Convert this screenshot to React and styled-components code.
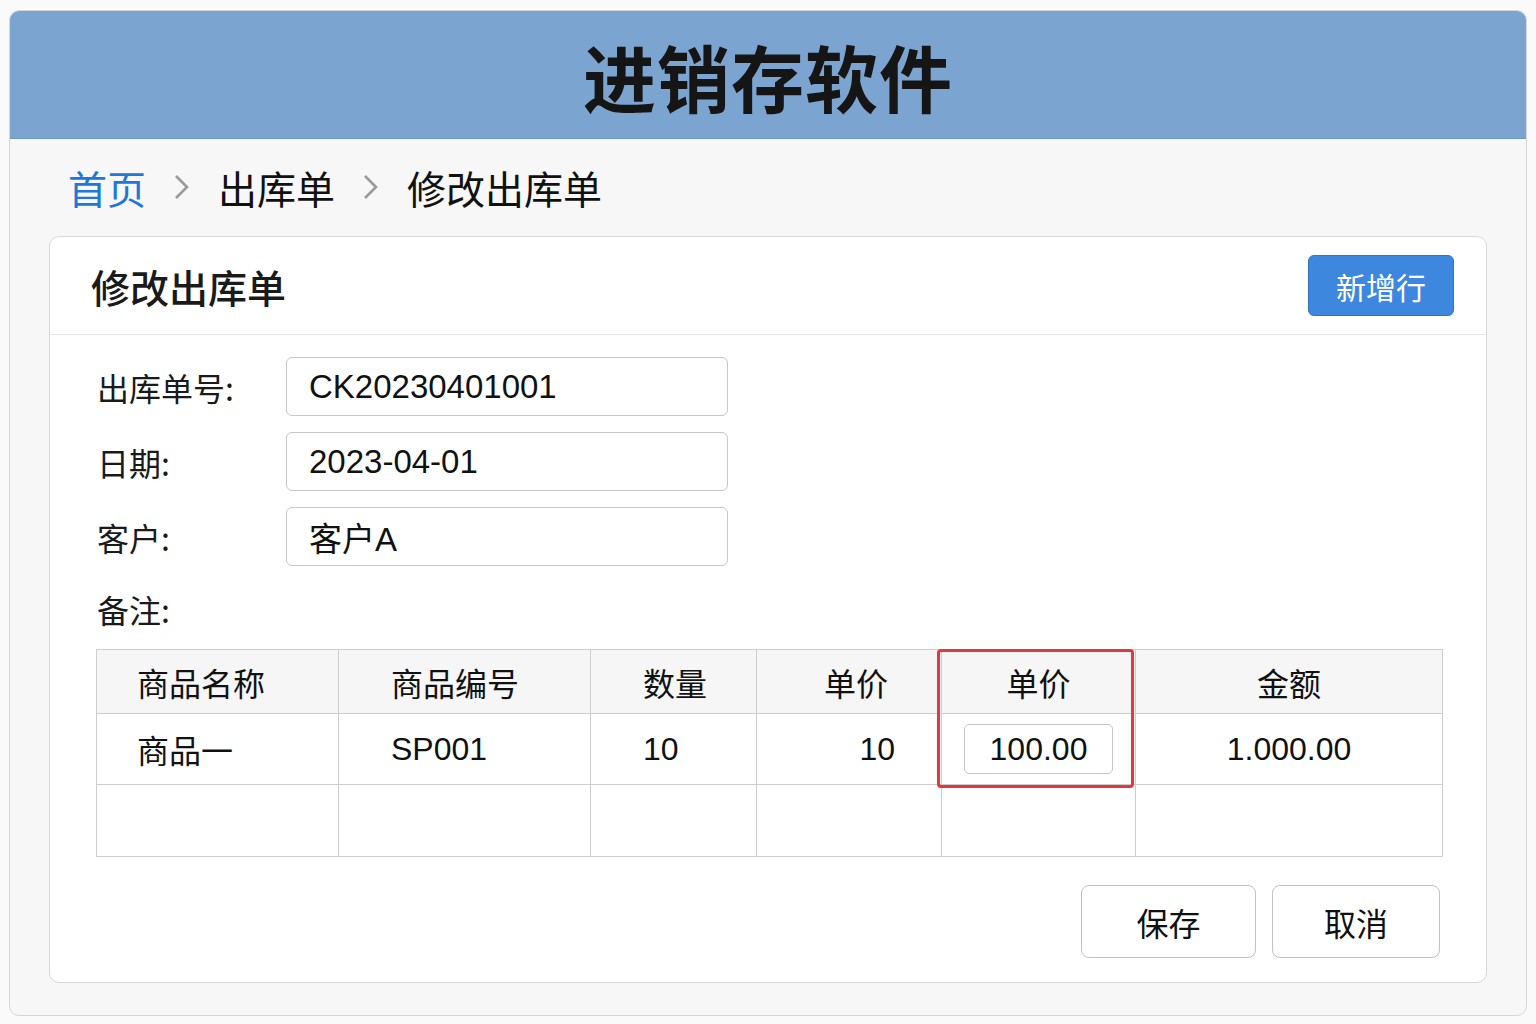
import React from "react";
import styled, { createGlobalStyle } from "styled-components";

const Global = createGlobalStyle`
  html, body { margin: 0; padding: 0; background: #fafafa; }
  body { font-family: "Liberation Sans", "Noto Sans CJK SC", sans-serif; color: #111; }
  * { box-sizing: border-box; }
`;

const Page = styled.div`
  padding: 10px 9px 9px 9px;
  width: 1536px;
  height: 1024px;
`;

const Frame = styled.div`
  border: 1px solid #d6d6d6;
  border-radius: 10px;
  overflow: hidden;
  background: #f7f7f7;
  height: 1006px;
  display: flex;
  flex-direction: column;
`;

const Header = styled.header`
  height: 128px;
  background: #7ba4d0;
  border-bottom: 1px solid #6f97c4;
  display: flex;
  align-items: center;
  justify-content: center;
`;

const Title = styled.h1`
  margin: 0;
  font-family: "Noto Sans CJK SC", sans-serif;
  font-weight: 700;
  font-size: 73px;
  letter-spacing: 1px;
  color: #151515;
`;

const Crumbs = styled.nav`
  height: 97px;
  display: flex;
  align-items: center;
  padding-left: 58px;
  padding-bottom: 2px;
  font-family: "Noto Sans CJK SC", sans-serif;
  font-size: 39px;
`;

const Crumb = styled.span`
  color: ${(p) => (p.$link ? "#1f78d8" : "#111")};
`;

const Sep = styled.span`
  display: inline-flex;
  width: 72px;
  justify-content: center;
  color: #999;
`;

const Card = styled.section`
  margin: 0 39px 0 39px;
  background: #fff;
  border: 1px solid #d8d8d8;
  border-radius: 10px;
  display: flex;
  flex-direction: column;
  height: 747px;
`;

const CardHead = styled.div`
  height: 98px;
  border-bottom: 1px solid #e6e6e6;
  display: flex;
  align-items: center;
  justify-content: space-between;
  padding: 0 32px 0 41px;
`;

const CardTitle = styled.h2`
  margin: 0;
  font-family: "Noto Sans CJK SC", sans-serif;
  font-weight: 500;
  font-size: 39px;
  color: #1a1a1a;
`;

const PrimaryButton = styled.button`
  width: 146px;
  height: 61px;
  background: #3e87de;
  border: 1px solid #2f74c8;
  border-radius: 6px;
  color: #fff;
  font-family: "Noto Sans CJK SC", sans-serif;
  font-size: 30px;
  padding: 0;
`;

const CardBody = styled.div`
  padding: 22px 46px 0 46px;
  display: flex;
  flex-direction: column;
`;

const FormRow = styled.div`
  display: flex;
  align-items: center;
  height: 59px;
  margin-bottom: 16px;
`;

const NoteRow = styled.div`
  display: flex;
  align-items: flex-start;
  height: 67px;
  padding-top: 4px;
`;

const Label = styled.label`
  width: 190px;
  font-family: "Noto Sans CJK SC", sans-serif;
  font-size: 32px;
  color: #1a1a1a;
  padding-left: 1px;
`;

const Field = styled.div`
  width: 442px;
  height: 59px;
  border: 1px solid #c8c8c8;
  border-radius: 6px;
  display: flex;
  align-items: center;
  padding-left: 22px;
  font-family: "Liberation Sans", "Noto Sans CJK SC", sans-serif;
  font-size: 33px;
  color: #111;
`;

const TableWrap = styled.div`
  position: relative;
`;

const Table = styled.table`
  width: 1346px;
  border-collapse: collapse;
  table-layout: fixed;
  font-family: "Liberation Sans", "Noto Sans CJK SC", sans-serif;
  font-size: 32px;
  color: #111;
`;

const Th = styled.th`
  height: 64px;
  background: #f6f6f6;
  border: 1.5px solid #cdcdcd;
  font-weight: 400;
  text-align: ${(p) => p.$align || "left"};
  padding: ${(p) => p.$pad || "0 0 0 40px"};
  font-family: "Noto Sans CJK SC", sans-serif;
`;

const Td = styled.td`
  height: ${(p) => p.$h || 71}px;
  border: 1.5px solid #cdcdcd;
  text-align: ${(p) => p.$align || "left"};
  padding: ${(p) => p.$pad || "0 0 0 40px"};
  vertical-align: middle;
  font-family: ${(p) => (p.$cjk ? '"Noto Sans CJK SC", sans-serif' : "inherit")};
`;

const CellInput = styled.div`
  display: inline-flex;
  align-items: center;
  justify-content: center;
  width: 149px;
  height: 50px;
  border: 1px solid #c6c6c6;
  border-radius: 5px;
  font-size: 32px;
`;

const Highlight = styled.div`
  position: absolute;
  left: 841px;
  top: 0;
  width: 197px;
  height: 139px;
  border: 3.5px solid #e0393e;
  border-radius: 4px;
  pointer-events: none;
`;

const Actions = styled.div`
  display: flex;
  justify-content: flex-end;
  gap: 16px;
  margin-top: 28px;
`;

const Button = styled.button`
  width: ${(p) => p.$w}px;
  height: 73px;
  background: #fff;
  border: 1px solid #c2c2c2;
  border-radius: 8px;
  font-family: "Noto Sans CJK SC", sans-serif;
  font-size: 32px;
  color: #111;
  padding: 0;
`;

const Chevron = () => (
  <Sep>
    <svg width="20" height="30" viewBox="0 0 20 30">
      <path d="M4 4 L15 15 L4 26" fill="none" stroke="#9a9a9a" strokeWidth="2.6" />
    </svg>
  </Sep>
);

export default function App() {
  return (
    <>
      <Global />
      <Page>
        <Frame>
          <Header>
            <Title>进销存软件</Title>
          </Header>
          <Crumbs>
            <Crumb $link>首页</Crumb>
            <Chevron />
            <Crumb>出库单</Crumb>
            <Chevron />
            <Crumb>修改出库单</Crumb>
          </Crumbs>
          <Card>
            <CardHead>
              <CardTitle>修改出库单</CardTitle>
              <PrimaryButton>新增行</PrimaryButton>
            </CardHead>
            <CardBody>
              <FormRow>
                <Label>出库单号:</Label>
                <Field>CK20230401001</Field>
              </FormRow>
              <FormRow>
                <Label>日期:</Label>
                <Field>2023-04-01</Field>
              </FormRow>
              <FormRow>
                <Label>客户:</Label>
                <Field>客户A</Field>
              </FormRow>
              <NoteRow>
                <Label>备注:</Label>
              </NoteRow>
              <TableWrap>
                <Table>
                  <colgroup>
                    <col style={{ width: 242 }} />
                    <col style={{ width: 252 }} />
                    <col style={{ width: 166 }} />
                    <col style={{ width: 185 }} />
                    <col style={{ width: 194 }} />
                    <col style={{ width: 307 }} />
                  </colgroup>
                  <thead>
                    <tr>
                      <Th>商品名称</Th>
                      <Th $pad="0 0 0 52px">商品编号</Th>
                      <Th $pad="0 0 0 52px">数量</Th>
                      <Th $align="right" $pad="0 53px 0 0">单价</Th>
                      <Th $align="center" $pad="0">单价</Th>
                      <Th $align="center" $pad="0">金额</Th>
                    </tr>
                  </thead>
                  <tbody>
                    <tr>
                      <Td $cjk>商品一</Td>
                      <Td $pad="0 0 0 52px">SP001</Td>
                      <Td $pad="0 0 0 52px">10</Td>
                      <Td $align="right" $pad="0 46px 0 0">10</Td>
                      <Td $align="center" $pad="0">
                        <CellInput>100.00</CellInput>
                      </Td>
                      <Td $align="center" $pad="0">1.000.00</Td>
                    </tr>
                    <tr>
                      <Td $h={72}></Td>
                      <Td $h={72}></Td>
                      <Td $h={72}></Td>
                      <Td $h={72}></Td>
                      <Td $h={72}></Td>
                      <Td $h={72}></Td>
                    </tr>
                  </tbody>
                </Table>
                <Highlight />
              </TableWrap>
              <Actions>
                <Button $w={175}>保存</Button>
                <Button $w={168}>取消</Button>
              </Actions>
            </CardBody>
          </Card>
        </Frame>
      </Page>
    </>
  );
}
